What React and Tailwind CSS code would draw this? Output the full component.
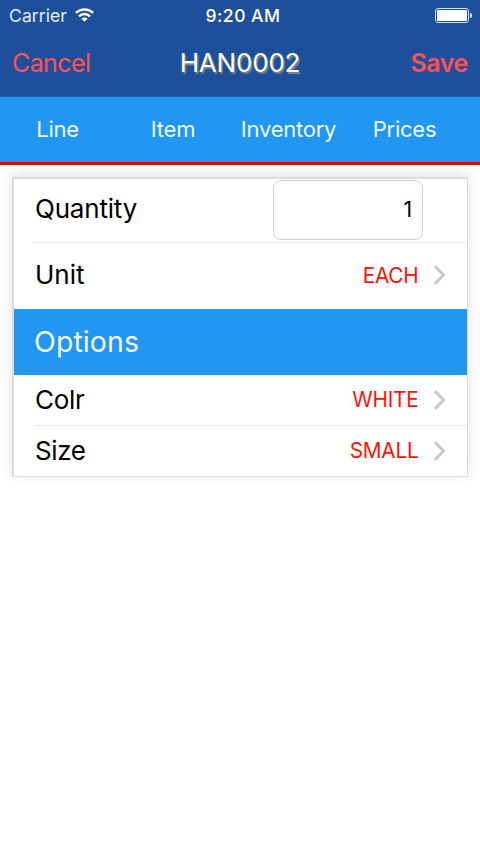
import React from "react";

function Wifi() {
  return (
    <svg width="19" height="14" viewBox="0 0 19 14" className="mb-px ml-2 block" fill="none" stroke="#fff">
      <path d="M0.9 4.9 A12.4 12.4 0 0 1 18.1 4.9" strokeWidth="2.5" />
      <path d="M4 8.3 A7.8 7.8 0 0 1 15 8.3" strokeWidth="2.4" />
      <path d="M9.5 13.8 L6.4 10.8 A4.4 4.4 0 0 1 12.6 10.8 Z" fill="#fff" stroke="none" />
    </svg>
  );
}

function Battery() {
  return (
    <div className="flex items-center">
      <div className="h-[15px] w-[34px] rounded-[3px] border border-[#d5deee] p-px">
        <div className="h-full rounded-[1px] bg-white" />
      </div>
      <div className="ml-px h-[5px] w-[2px] rounded-r-full bg-[#e4eaf4]" />
    </div>
  );
}

function Chevron() {
  return (
    <svg width="12" height="20" viewBox="0 0 12 20" className="ml-[15px] block" fill="none" stroke="#c7c7cc" strokeWidth="2.8">
      <path d="M0.9 1.1 L9.6 10 L0.9 18.9" />
    </svg>
  );
}

function Row({ label, labelClass, value, className }) {
  return (
    <div className={"ml-5 flex items-center pr-[21px] pb-px " + className}>
      <span className={"flex-1 pl-px text-[26px] text-black " + labelClass}>{label}</span>
      <span className="pt-[2px] pr-[0.5px] text-[20.75px] tracking-[-0.2px] text-[#ff1205]">{value}</span>
      <Chevron />
    </div>
  );
}

export default function App() {
  return (
    <div className="h-[852px] w-[480px] overflow-hidden bg-white font-[Inter,sans-serif] leading-none whitespace-nowrap">
      <header className="h-[97px] border-b border-[#1d62ab] bg-[#1d4f9b]">
        <div className="grid h-[31px] grid-cols-3 items-center pr-2 pl-[9px] text-white">
          <div className="flex items-center">
            <span className="text-[17.5px] tracking-[0.1px] text-[#e8edf5]">Carrier</span>
            <Wifi />
          </div>
          <span className="pl-[5px] text-center text-[17.5px] font-medium tracking-[0.5px]">9:20 AM</span>
          <div className="flex justify-end">
            <Battery />
          </div>
        </div>
        <div className="grid h-[65px] grid-cols-3 items-center px-3 text-[25px] text-[#ff5158]">
          <span className="tracking-[-0.6px]">Cancel</span>
          <span className="pb-[2px] text-center text-[26px] tracking-[-0.2px] text-white [text-shadow:1.5px_1.5px_1px_#85857d]">HAN0002</span>
          <span className="text-right font-semibold tracking-[-0.4px]">Save</span>
        </div>
      </header>
      <nav className="flex h-[68px] items-center border-b-[3px] border-[#d60000] bg-[#2196f3] pb-[2px] text-center text-[22px] tracking-[-0.25px] text-[#eff8ff]">
        <span className="w-[115px]">Line</span>
        <span className="w-[116px]">Item</span>
        <span className="w-[115px]">Inventory</span>
        <span className="w-[117px]">Prices</span>
      </nav>
      <main className="mx-3 mt-3 flex h-[300px] flex-col border-t-2 border-r border-b border-l-2 border-[#dcdcdc] bg-white shadow-[0_-3px_12px_rgba(0,0,0,0.12)]">
        <div className="ml-5 flex h-[64px] items-start border-b border-[#ebebed]">
          <span className="flex h-[60px] flex-1 items-center pl-px text-[26px] tracking-[-0.2px] text-black">Quantity</span>
          <div className="mt-px mr-[44px] flex h-[60px] w-[150px] items-center justify-end rounded-[8px] border border-[#cdcdcf] pr-[10px] pb-[2px] text-[21px] text-black">
            1
          </div>
        </div>
        <Row label="Unit" labelClass="" value="EACH" className="h-[65px]" />
        <div className="mt-px flex h-[66px] items-center bg-[#2196f3] pl-[20px] text-[28.5px] tracking-[0.1px] text-[#f2f8fd]">
          <span>Options</span>
        </div>
        <Row label="Colr" labelClass="tracking-[-0.3px]" value="WHITE" className="h-[51px] border-b border-[#ebebed]" />
        <Row label="Size" labelClass="tracking-[-0.4px]" value="SMALL" className="h-[50px]" />
      </main>
    </div>
  );
}
